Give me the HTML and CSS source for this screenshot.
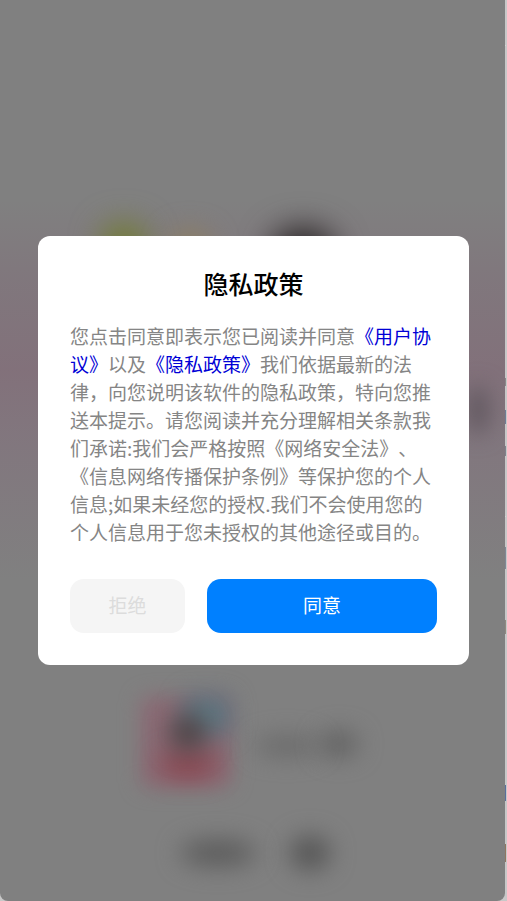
FILE: index.html
```html
<!DOCTYPE html>
<html lang="zh-CN">
<head>
<meta charset="utf-8">
<title>隐私政策</title>
<link rel="stylesheet" href="styles.css">
</head>
<body>
<div class="page">
  <div class="edge">
    <i class="tick t1"></i><i class="tick t2"></i><i class="tick t3"></i><i class="tick t4"></i><i class="tick t5"></i><i class="tick t6"></i><i class="tick t7"></i><i class="tick t8"></i><i class="tick t9"></i>
  </div>
  <div class="backdrop">
    <div class="tint"></div>
    <i class="blob green"></i>
    <i class="blob tan"></i>
    <i class="blob dark"></i>
    <i class="blob darkright"></i>
    <i class="blob logo-base"></i>
    <i class="blob logo-blue"></i>
    <i class="blob logo-red"></i>
    <i class="blob logo-core"></i>
    <i class="blob name1"></i>
    <i class="blob name2"></i>
    <i class="blob btn1"></i>
    <i class="blob btn2"></i>
  </div>
  <section class="dialog">
    <h1 class="title">隐私政策</h1>
    <p class="body">您点击同意即表示您已阅读并同意<a class="link">《用户协议》</a>以及<a class="link">《隐私政策》</a>我们依据最新的法律，向您说明该软件的隐私政策，特向您推送本提示。请您阅读并充分理解相关条款我们承诺:我们会严格按照《网络安全法》、《信息网络传播保护条例》等保护您的个人信息;如果未经您的授权.我们不会使用您的个人信息用于您未授权的其他途径或目的。</p>
    <div class="actions">
      <button class="btn reject">拒绝</button>
      <button class="btn agree">同意</button>
    </div>
  </section>
</div>
</body>
</html>
```
FILE: styles.css
```css
* { box-sizing: border-box; }
html, body { margin: 0; height: 100%; overflow: hidden; }
body { background: #c8c8c8; font-family: "Noto Sans CJK SC", "Noto Sans", sans-serif; }
.page { position: relative; width: 507px; height: 901px; display: grid; place-items: center; overflow: hidden; }
.edge { position: absolute; inset: 0 0 0 auto; width: 2px; background: #c8c8c8; }
.tick { position: absolute; left: 0; width: 1px; }
.t1 { top: 45px; height: 1px; background: #d8d8d8; }
.t2 { top: 378px; height: 8px; background: #8a8a8a; }
.t3 { top: 410px; height: 14px; background: #6f7d96; }
.t4 { top: 446px; height: 10px; background: #7f838c; }
.t5 { top: 516px; height: 1px; background: #d8d8d8; }
.t6 { top: 547px; height: 22px; background: #7f8896; }
.t7 { top: 620px; height: 14px; background: #8f8a80; }
.t8 { top: 785px; height: 16px; background: #5a6e9c; }
.t9 { top: 844px; height: 18px; background: #8f7560; }
.backdrop { position: absolute; left: 0; top: 0; width: 505px; height: 901px; background: #808080; border-radius: 0 0 8px 8px; overflow: hidden; }
.tint { position: absolute; left: 0; right: 0; top: 200px; height: 380px; background: linear-gradient(180deg, rgba(128,112,124,0) 0%, rgba(128,112,122,.55) 20%, rgba(130,112,122,.95) 45%, rgba(130,115,125,.75) 62%, rgba(128,122,128,0) 100%); }
.blob { position: absolute; display: block; border-radius: 50%; filter: blur(16px); }
.green { left: 102px; top: 224px; width: 44px; height: 44px; background: #6f7c26; }
.tan { left: 170px; top: 232px; width: 40px; height: 34px; background: #8f7f5c; filter: blur(14px); }
.dark { left: 270px; top: 228px; width: 66px; height: 52px; background: #262223; }
.darkright { left: 468px; top: 385px; width: 20px; height: 50px; background: #5d545c; filter: blur(11px); }
.logo-base { left: 140px; top: 696px; width: 92px; height: 92px; border-radius: 10px; background: #8a6a74; filter: blur(10px); }
.logo-blue { left: 182px; top: 694px; width: 50px; height: 42px; border-radius: 10px; background: #5f7680; filter: blur(11px); }
.logo-red { left: 158px; top: 752px; width: 60px; height: 26px; background: #8b4650; filter: blur(12px); }
.logo-core { left: 170px; top: 714px; width: 36px; height: 38px; background: #4a4042; filter: blur(13px); }
.name1 { left: 254px; top: 737px; width: 66px; height: 18px; background: #666; filter: blur(12px); }
.name2 { left: 320px; top: 732px; width: 38px; height: 24px; background: #5e5e5e; filter: blur(12px); }
.btn1 { left: 180px; top: 840px; width: 76px; height: 26px; background: #5a5a5a; filter: blur(12px); }
.btn2 { left: 290px; top: 836px; width: 40px; height: 34px; background: #545454; filter: blur(12px); }
.dialog { position: relative; width: 431px; height: 429px; padding: 30px 32px 32px; background: #fff; border-radius: 12px; display: flex; flex-direction: column; }
.title { margin: 0; font-size: 25px; font-weight: 500; line-height: 34px; text-align: center; color: #000; }
.body { margin: 22px 0 0; font-size: 19px; line-height: 28px; color: #858585; text-spacing-trim: space-all; }
.link { color: #0000d6; }
.actions { display: flex; gap: 22px; margin-top: 33px; }
.btn { height: 54px; border: 0; border-radius: 14px; font: inherit; font-size: 19px; padding: 0 0 3px; }
.reject { width: 115px; background: #f5f5f5; color: #dcdcdc; }
.agree { width: 230px; background: #0080ff; color: #fff; }
```
